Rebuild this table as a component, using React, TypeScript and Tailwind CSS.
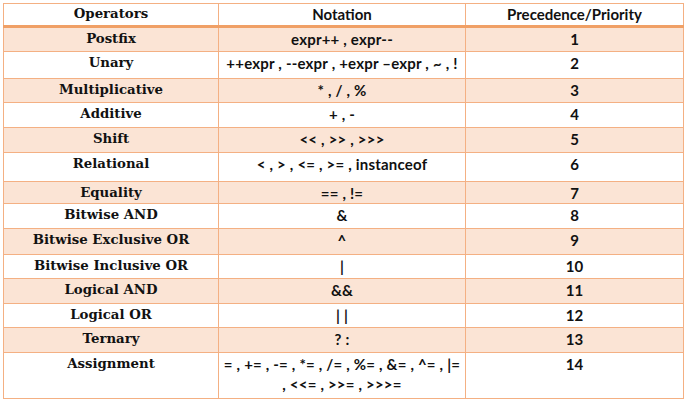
import React from 'react';

type Row = {
  op: string;
  notation: string[];
  rank: number;
  shaded: boolean;
  h: string;
};

const rows: Row[] = [
  { op: 'Postfix', notation: ['expr++ , expr--'], rank: 1, shaded: true, h: 'h-[25px]' },
  { op: 'Unary', notation: ['++expr , --expr , +expr \u2013expr , ~ , !'], rank: 2, shaded: false, h: 'h-[27px]' },
  { op: 'Multiplicative', notation: ['* , / , %'], rank: 3, shaded: true, h: 'h-[24px]' },
  { op: 'Additive', notation: ['+ , -'], rank: 4, shaded: false, h: 'h-[25px]' },
  { op: 'Shift', notation: ['<< , >> , >>>'], rank: 5, shaded: true, h: 'h-[25px]' },
  { op: 'Relational', notation: ['< , > , <= , >= , instanceof'], rank: 6, shaded: false, h: 'h-[29px]' },
  { op: 'Equality', notation: ['== , !='], rank: 7, shaded: true, h: 'h-[22px]' },
  { op: 'Bitwise AND', notation: ['&'], rank: 8, shaded: false, h: 'h-[25px]' },
  { op: 'Bitwise Exclusive OR', notation: ['^'], rank: 9, shaded: true, h: 'h-[26px]' },
  { op: 'Bitwise Inclusive OR', notation: ['|'], rank: 10, shaded: false, h: 'h-[24px]' },
  { op: 'Logical AND', notation: ['&&'], rank: 11, shaded: true, h: 'h-[25px]' },
  { op: 'Logical OR', notation: ['| |'], rank: 12, shaded: false, h: 'h-[24px]' },
  { op: 'Ternary', notation: ['? :'], rank: 13, shaded: true, h: 'h-[25px]' },
  {
    op: 'Assignment',
    notation: ['= , += , -= , *= , /= , %= , &= , ^= , |=', ', <<= , >>= , >>>='],
    rank: 14,
    shaded: false,
    h: 'h-[46px]'
  }
];

const serif = "font-['DejaVu_Serif',serif]";
const sans = "font-['Lato','Open_Sans',sans-serif]";

export default function App() {
  return (
    <div className="bg-white w-[688px] h-[401px] pt-[3px] pl-[3px]">
      <table className="border-collapse w-[680px] table-fixed text-[#111] font-bold">
        <colgroup>
          <col className="w-[215px]" />
          <col className="w-[247px]" />
          <col className="w-[218px]" />
        </colgroup>
        <thead>
          <tr className="h-[23px]">
            <th className={`border border-[#f4b083] border-b-[3px] border-b-[#f0a066] text-[13.3px] leading-[18px] align-top pt-[1px] ${serif}`}>
              Operators
            </th>
            <th className={`border border-[#f4b083] border-b-[3px] border-b-[#f0a066] text-[15px] leading-[18px] align-top pt-[1px] ${sans}`}>
              Notation
            </th>
            <th className={`border border-[#f4b083] border-b-[3px] border-b-[#f0a066] text-[15px] leading-[18px] align-top pt-[1px] ${sans}`}>
              Precedence/Priority
            </th>
          </tr>
        </thead>
        <tbody>
          {rows.map(row => (
            <tr key={row.op} className={`${row.h} ${row.shaded ? 'bg-[#fbe4d5]' : 'bg-white'}`}>
              <td className={`border border-[#f4b083] text-center align-top pt-[2px] text-[13.3px] leading-[18px] ${serif}`}>
                {row.op}
              </td>
              <td className={`border border-[#f4b083] text-center align-top pt-[1px] text-[15px] leading-[20px] tracking-[0.2px] ${sans}`}>
                {row.notation.map(line => (
                  <div key={line}>{line}</div>
                ))}
              </td>
              <td className={`border border-[#f4b083] text-center align-top pt-[1px] text-[15px] leading-[20px] ${sans}`}>
                {row.rank}
              </td>
            </tr>
          ))}
        </tbody>
      </table>
    </div>
  );
}
